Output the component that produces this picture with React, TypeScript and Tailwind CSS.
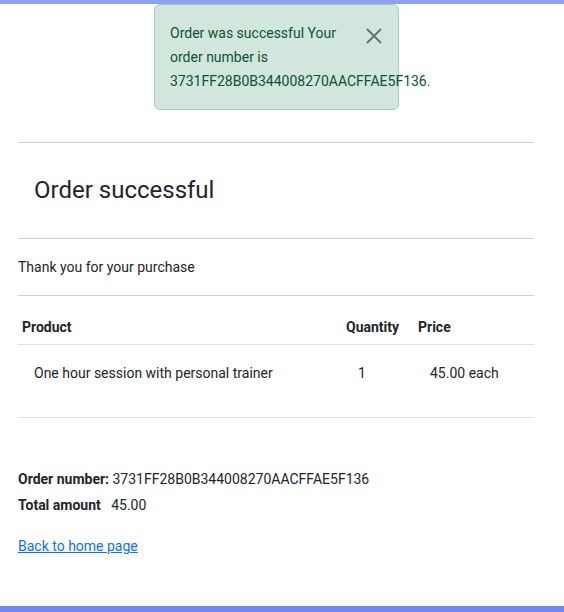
import React from "react";

export default function App() {
  return (
    <div className="relative min-h-[612px] w-[564px] bg-white text-[#212529]" style={{ fontFamily: "Roboto, 'Liberation Sans', sans-serif" }}>
      <div className="h-[4px] bg-[#8fa0f2]" />
      <div className="absolute left-[154px] top-[4px] flex h-[106px] w-[245px] rounded-[6px] border border-[#a3cfbb] bg-[#d1e7dd] pl-[15px] pt-[16px] text-[14px] leading-[24px] text-[#0f5132]">
        <div className="w-[180px] break-normal">Order was successful Your order number is <span className="whitespace-nowrap">3731FF28B0B344008270AACFFAE5F136.</span></div>
        <svg className="ml-[14px] mt-[5px]" width="20" height="20" viewBox="0 0 20 20" stroke="#6c6c6c" strokeWidth="1.8" fill="none">
          <path d="M3 3L17 17M17 3L3 17" />
        </svg>
      </div>
      <div className="pl-[18px] pr-[30px] pt-[138px]">
        <hr className="border-t border-[#cfcfcf]" />
        <h1 className="px-[16px] py-[32px] text-[24px] leading-[31px]">Order successful</h1>
        <hr className="border-t border-[#cfcfcf]" />
        <p className="py-[16px] text-[14px] leading-[24px]">Thank you for your purchase</p>
        <hr className="border-t border-[#cfcfcf]" />
        <table className="mt-[14px] w-full text-[14px] leading-[18px]">
          <thead>
            <tr className="border-b border-[#dee2e6]">
              <th className="py-[8px] pl-[4px] text-left font-bold">Product</th>
              <th className="w-[72px] py-[8px] text-left font-bold">Quantity</th>
              <th className="w-[116px] py-[8px] text-left font-bold">Price</th>
            </tr>
          </thead>
          <tbody className="leading-[20px]">
            <tr>
              <td className="pb-[34px] pl-[16px] pt-[18px]">One hour session with personal trainer</td>
              <td className="pb-[34px] pl-[12px] pt-[18px]">1</td>
              <td className="pb-[34px] pl-[12px] pt-[18px]">45.00 each</td>
            </tr>
          </tbody>
        </table>
        <hr className="border-t border-[#e0e0e0]" />
        <div className="mt-[48px] text-[14px] leading-[26px]">
          <div><span className="font-bold">Order number:</span> 3731FF28B0B344008270AACFFAE5F136</div>
          <div><span className="font-bold">Total amount</span>&nbsp;&nbsp; 45.00</div>
        </div>
        <a href="#" className="mt-[16px] inline-block text-[14px] leading-[24px] text-[#0d6efd] underline">Back to home page</a>
      </div>
      <div className="absolute bottom-0 left-0 h-[6px] w-full bg-[#6f88f5]" />
    </div>
  );
}
